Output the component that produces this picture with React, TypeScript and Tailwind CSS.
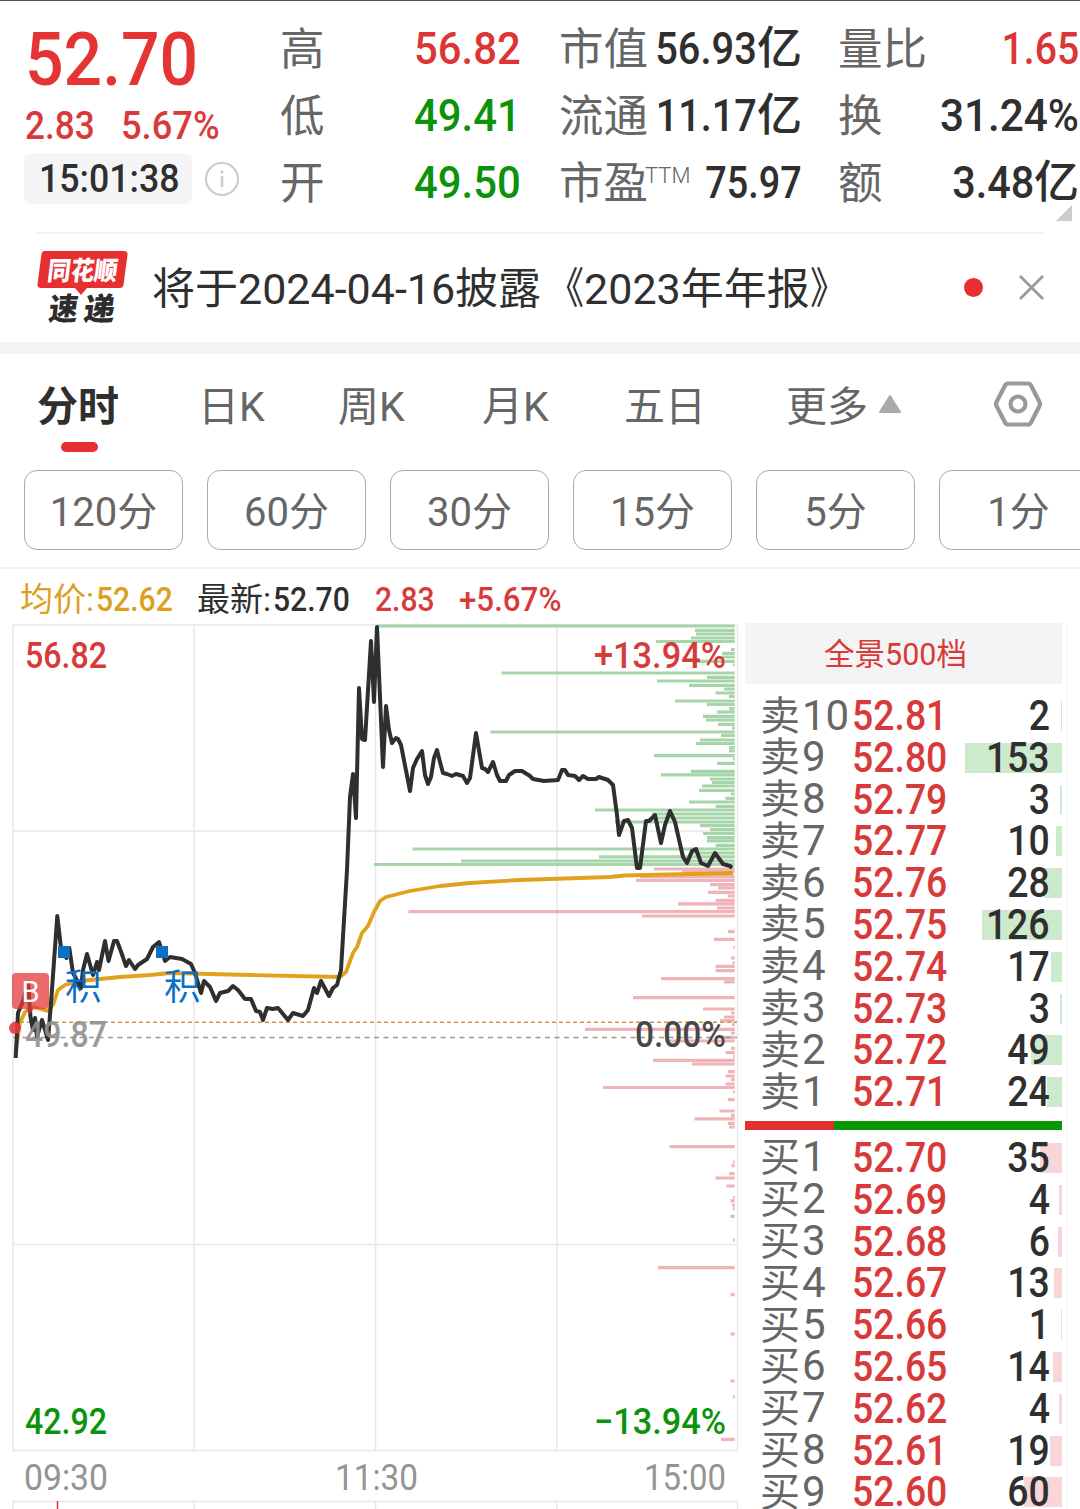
import React from 'react'
import clsx from 'clsx'

type Tone = 'red' | 'green' | 'dark'

const toneClass: Record<Tone, string> = {
  red: 'text-[#dc3535]',
  green: 'text-[#0b930b]',
  dark: 'text-[#2f2f2f]',
}

const quotes: { label: string, sup?: string, value: string, unit?: string, tone: Tone, scale: string }[][] = [
  [
    { label: '高', value: '56.82', tone: 'red', scale: 'scale-x-[.93]' },
    { label: '低', value: '49.41', tone: 'green', scale: 'scale-x-[.93]' },
    { label: '开', value: '49.50', tone: 'green', scale: 'scale-x-[.93]' },
  ],
  [
    { label: '市值', value: '56.93', unit: '亿', tone: 'dark', scale: 'scale-x-[.885]' },
    { label: '流通', value: '11.17', unit: '亿', tone: 'dark', scale: 'scale-x-[.88]' },
    { label: '市盈', sup: 'TTM', value: '75.97', tone: 'dark', scale: 'scale-x-[.84]' },
  ],
  [
    { label: '量比', value: '1.65', tone: 'red', scale: 'scale-x-[.87]' },
    { label: '换', value: '31.24%', tone: 'dark', scale: 'scale-x-[.94]' },
    { label: '额', value: '3.48', unit: '亿', tone: 'dark', scale: 'scale-x-[.92]' },
  ],
]

const columnClass = ['left-[280px] w-[241px]', 'left-[559px] w-[243px]', 'left-[838px] w-[241px]']
const periods = ['120分', '60分', '30分', '15分', '5分', '1分']

const asks: [string, string, number][] = [
  ['10', '52.81', 2], ['9', '52.80', 153], ['8', '52.79', 3], ['7', '52.77', 10], ['6', '52.76', 28],
  ['5', '52.75', 126], ['4', '52.74', 17], ['3', '52.73', 3], ['2', '52.72', 49], ['1', '52.71', 24],
]
const bids: [string, string, number][] = [
  ['1', '52.70', 35], ['2', '52.69', 4], ['3', '52.68', 6], ['4', '52.67', 13], ['5', '52.66', 1],
  ['6', '52.65', 14], ['7', '52.62', 4], ['8', '52.61', 19], ['9', '52.60', 60],
]

// intraday price
const priceLine = '15.7,1058 18,1013 23,1001 28,983 30.5,1017 33,1030 35,1018 37,1037 42,1020 48,1040 51,1003 57.3,916 61,948 66.5,958 69.3,948 73,973 81,988 83,970 87,954 93,975 97,962 99,970 105,941 108.5,961 114,941 117,941 121.5,953 126,966 129,960 135,969 138,965 147,959 153,947 159,942 165,961 170,957 182,959 191,964 195,973 201,993 204,981 210,987 216,1001 220,993 228,991 233,986 238,990 245,999 251,999 256,1011 260,1012 263,1020 267,1008 273,1009 278,1008 283,1014 288,1020 293,1013 303,1016 308,1010 314,988 317,993 321,981 329,996 333,988 337,985 341,970 347,870 350,797 353,774 356,818 359,688 362,739 365,740 371,641 374,702 377,627 383,767 386,706 389,730 392,743 396,738 398,739 401,745 410,791 413,768 417,759 422,751 425,775 428,784 431,777 434,758 437,750 440,762 443,773 447,774 452,776 456,774 463,776 467,783 470,778 476,733 482,768 485,769 488,772 493,762 497,775 500,781 506,781 509,775 515,771 522,771 530,776 533,779 544,781 558,780 562,770 565,770 568,775 575,776 579,780 583,776 588,779 596,779 599,777 608,780 613,785 617,815 619,835 624,821 628,820 632,828 637,868 640,868 646,821 649,821 655,815 661,843 665,825 670,811 675,822 683,857 687,863 692,851 696,849 701,863 708,866 715,853 723,864 730,866 732,868'
// volume weighted average
const averageLine = '16,1050 20,1023 25,1012 33,1007 48,1011 53,1005 58,990 65,985 80,981 100,979 120,977 150,975 170,973 250,975 340,977 346,972 353,953 357,947 362,933 368,926 374,912 380,901 386,897 410,891 440,886 470,883 520,880 610,877 625,875.5 733,873'

// [y, left edge] of each price level, bars end at the right side
const sellLevels = [
  [626, 377], [630.3, 695], [634, 696], [638, 691], [641.5, 656], [649.5, 731], [653.3, 722], [657, 722], [661.3, 696], [665, 733],
  [673, 501.5], [677.3, 707], [681, 657], [685.3, 689], [689, 724], [693, 715.5], [696.5, 729], [701, 675], [704.5, 707], [708.7, 729],
  [712, 717], [716.3, 703], [720, 706], [724.3, 718], [728, 732], [732, 490.5], [735.5, 721], [740, 700], [743.5, 696], [747.7, 729],
  [751, 729], [755.7, 654], [759, 733], [763.3, 717], [771.3, 691], [774.8, 661], [779, 710], [782.5, 712], [786, 702], [790.3, 699],
  [794, 731], [798.3, 725.5], [802, 689], [806.3, 715.5], [810, 595], [814, 652], [818, 655], [822, 615], [825.7, 700], [829.7, 710],
  [833.5, 703], [837.7, 707], [841, 707], [845.3, 715.5], [849, 412.5], [853, 690], [856.8, 599], [861, 461], [864.5, 374],
]
const buyLevels = [
  [869, 654], [872, 682], [876.7, 640], [880.3, 636], [884.7, 710], [888, 718], [892.3, 708], [896, 728], [900.3, 715.5], [903.8, 678],
  [908, 717], [911.7, 408.5], [916, 642], [931.7, 728], [939.3, 714], [947.3, 733.5], [958, 731], [963, 732.5], [966.3, 715.5],
  [970.7, 715.5], [978.7, 661], [982, 724], [997.7, 633], [1009, 703], [1013, 731], [1017, 724], [1020.7, 720], [1024.7, 732],
  [1029.3, 585], [1033, 731], [1037.3, 722], [1041, 667], [1048.3, 731], [1052.7, 725.5], [1056.7, 733], [1060.3, 653], [1064, 692],
  [1071.7, 728], [1076, 725.5], [1079.7, 731], [1084, 725.5], [1087.5, 603], [1092, 733], [1099.7, 728], [1111, 719.5], [1115.3, 731],
  [1118.8, 694.5], [1123.3, 728], [1127, 729], [1146.7, 669.5], [1162, 733], [1165.7, 731.5], [1173.7, 729], [1178, 715.5], [1186, 726.5],
  [1197.3, 733], [1200.8, 730.5], [1205, 732], [1208.7, 733], [1216.3, 730.5], [1240, 733], [1267.7, 658], [1294.7, 730.5],
  [1334, 730.5], [1381, 730.5], [1396.7, 733], [1439.3, 721],
]

function Num({ children, className }: { children: React.ReactNode, className?: string }) {
  return <span className={clsx('inline-block whitespace-nowrap font-medium', className)}>{children}</span>
}

function ChartText({ x, y, w, color, weight = 500, children }: { x: number, y: number, w: number, color: string, weight?: number, children: string }) {
  return (
    <text x={x} y={y} textLength={w} lengthAdjust="spacingAndGlyphs" fill={color} fontSize="36.5" fontWeight={weight}>
      {children}
    </text>
  )
}

function Header() {
  return (
    <header className="relative h-[232px] border-t border-[#555]">
      <div className="ml-[25px] w-[240px] pt-[16px]">
        <Num className="block origin-left scale-x-[.905] text-[75px] leading-[84px] text-[#e53434]">52.70</Num>
        <div className="flex h-[50px] items-center text-[39px] leading-none text-[#d83a3a]">
          <Num className="w-[96px] origin-left scale-x-[.9]">2.83</Num>
          <Num className="origin-left scale-x-[.93]">5.67%</Num>
        </div>
        <div className="-ml-px mt-[2px] flex items-center">
          <div className="flex h-[51px] w-[168px] items-center rounded-lg bg-[#f5f5f5] pl-[15px] pt-[2px] text-[39px] text-[#2f2f2f]">
            <Num className="origin-left scale-x-[.915]">15:01:38</Num>
          </div>
          <svg className="ml-3 h-9 w-9" viewBox="0 0 36 36" fill="none" stroke="#ccc" strokeWidth="2.2">
            <circle cx="18" cy="18" r="16" />
            <path d="M18 15v11M18 9.5v3" strokeWidth="2.6" />
          </svg>
        </div>
      </div>
      {quotes.map((column, i) => (
        <dl key={i} className={clsx('absolute top-[14px]', columnClass[i])}>
          {column.map((q) => (
            <div key={q.label} className="flex h-[67px] items-center justify-between whitespace-nowrap text-[45px] leading-none">
              <dt className="flex pt-[3px] text-[44.5px] text-[#666]">
                {q.label}
                {q.sup && <sup className="-ml-[3px] top-0 mt-[3px] text-[22px] font-light leading-none">{q.sup}</sup>}
              </dt>
              <dd className={clsx('flex items-center', toneClass[q.tone])}>
                <Num className={clsx('-ml-10 origin-right', q.scale)}>{q.value}</Num>
                {q.unit && <span className="font-medium">{q.unit}</span>}
              </dd>
            </div>
          ))}
        </dl>
      ))}
      <svg className="absolute right-2 top-[204px] h-4 w-4" viewBox="0 0 16 16"><path d="M16 0v16H0z" fill="#ccc" /></svg>
    </header>
  )
}

function Notice() {
  return (
    <div className="ml-9 mr-9 flex h-[110px] items-center border-t-2 border-[#f4f4f4]">
      <svg className="h-[80px] w-[94px] shrink-0" viewBox="36 248 94 80">
        <path d="M45 251h79q4 0 3.500 4l-4 30q-.5 3-4 3H87l-6 7-6-7H41q-4 0-3.500-4l4-30q.5-3 3.500-3z" fill="#e72e30" />
        <g transform="skewX(-7)">
          <text x="81" y="280" fill="#fff" fontSize="26" fontWeight="900" textLength="70" lengthAdjust="spacingAndGlyphs">同花顺</text>
          <text x="87" y="320" fill="#2d2d2d" fontSize="31" fontWeight="900" textLength="29" lengthAdjust="spacingAndGlyphs">速</text>
          <text x="122" y="320" fill="#2d2d2d" fontSize="31" fontWeight="900" textLength="31" lengthAdjust="spacingAndGlyphs">递</text>
        </g>
      </svg>
      <p className="ml-[22px] flex-1 whitespace-nowrap pt-[3px] text-[43px] text-[#2f2f2f]">
        将于2024-04-16披露
        <span className="inline-block origin-right scale-x-[.85]">《</span>2023年年报<span className="inline-block origin-left scale-x-[.85]">》</span>
      </p>
      <span className="h-[19px] w-[19px] -translate-y-px rounded-full bg-[#e72e30]" />
      <svg className="ml-9 h-[25px] w-[25px] -translate-y-px" viewBox="0 0 25 25" stroke="#999" strokeWidth="2.800"><path d="M1 1l23 23M24 1L1 24" /></svg>
    </div>
  )
}

function Tabs() {
  return (
    <nav className="relative h-[116px] border-t-[12px] border-[#f4f4f4] text-[41px] text-[#666]">
      <div className="flex h-[99px] items-center whitespace-nowrap pl-[37px]">
        <div className="flex pt-[8px]">
          <span className="w-[161px] font-bold text-[#2f2f2f]">分时</span>
          <span className="w-[140px]">日K</span>
          <span className="w-[144px]">周K</span>
          <span className="w-[142px]">月K</span>
          <span className="w-[162px]">五日</span>
          <span className="w-[82px]">更多</span>
        </div>
        <svg className="ml-[10px] h-5 w-6" viewBox="0 0 24 20"><path d="M12 2l10 16H2z" fill="#aaa" stroke="#aaa" strokeWidth="2" strokeLinejoin="round" /></svg>
        <svg className="ml-[91px] h-[50px] w-[50px]" viewBox="0 0 50 50" fill="none" stroke="#999" strokeWidth="4.200" strokeLinejoin="round">
          <path d="M15 4.500h20q2 0 3 2l8.500 16.500q1 2 0 4L38 43.500q-1 2-3 2H15q-2 0-3-2L3.500 27q-1-2 0-4L12 6.500q1-2 3-2z" />
          <circle cx="25" cy="25" r="7.500" />
        </svg>
      </div>
      <span className="absolute left-[61px] top-[88px] h-[10px] w-[37px] rounded-full bg-[#e72e30]" />
    </nav>
  )
}

function Chart() {
  return (
    <svg className="h-[886px] w-[744px] shrink-0" viewBox="0 623 744 886">
      <g fill="none" stroke="#e8e8e8" strokeWidth="1.500">
        <path d="M13 625H737.500V1450.500H13zM13 831H737M13 1244.500H737" />
        <path d="M194 625V1450M375.500 625V1450M557 625V1450" />
        <path d="M13 1509V1501.500H737.500V1509M194 1502v7M375.500 1502v7M557 1502v7" />
      </g>
      <path d="M57.500 1501v8" stroke="#dc3535" strokeWidth="1.500" />
      <path d={sellLevels.map(([y, x]) => `M${x} ${y}H734.700`).join('')} stroke="#8fcb92" strokeOpacity=".8" strokeWidth="3.200" />
      <path d={buyLevels.map(([y, x]) => `M${x} ${y}H734.700`).join('')} stroke="#e99b9d" strokeOpacity=".75" strokeWidth="3.200" />
      <path d="M13 1022.300H737" stroke="#d1954a" strokeWidth="1.600" strokeDasharray="4 3" />
      <path d="M13 1037.500H737" stroke="#999" strokeWidth="1.600" strokeDasharray="5 4.500" />
      <polyline points={averageLine} fill="none" stroke="#e0a21c" strokeWidth="3.800" strokeLinejoin="round" />
      <polyline points={priceLine} fill="none" stroke="#2f2f2f" strokeWidth="4" strokeLinejoin="round" />

      <ChartText x={25} y={668} w={82} color="#d83a3a">56.82</ChartText>
      <ChartText x={594} y={668} w={132} color="#d83a3a">+13.94%</ChartText>
      <g opacity=".9"><ChartText x={25} y={1047} w={82} color="#909090">49.87</ChartText></g>
      <ChartText x={635} y={1047} w={91} color="#484848">0.00%</ChartText>
      <ChartText x={25} y={1434} w={82} color="#0b930b">42.92</ChartText>
      <ChartText x={594} y={1434} w={132} color="#0b930b">−13.94%</ChartText>
      <ChartText x={24} y={1490} w={84} color="#949494" weight={400}>09:30</ChartText>
      <ChartText x={335} y={1490} w={83} color="#949494" weight={400}>11:30</ChartText>
      <ChartText x={644} y={1490} w={82} color="#949494" weight={400}>15:00</ChartText>

      <g fill="#0b6fc6" fontSize="36.500">
        <path d="M58 946h12v12H58zM156 946h12v12h-12z" />
        <text x="65" y="1000">积</text>
        <text x="164" y="1000">积</text>
      </g>
      <path d="M16 973h29q4 0 4 4v28q0 4-4 4H34l-4 5-4-5H16q-4 0-4-4v-28q0-4 4-4z" fill="#e4393c" fillOpacity=".75" />
      <text x="30.500" y="1001.500" textAnchor="middle" fill="#fff" fontSize="29">B</text>
      <circle cx="15" cy="1028" r="6" fill="#e4393c" fillOpacity=".9" />
    </svg>
  )
}

function OrderRow({ side, level, price, size }: { side: 'ask' | 'bid', level: string, price: string, size: number }) {
  return (
    <div className="relative flex h-[41.8px] items-center whitespace-nowrap pl-[15px] text-[42px] leading-[41.8px]">
      <span
        className={clsx('absolute right-0 top-[6px] h-[30px]', side === 'ask' ? 'bg-[#cdeacd]' : 'bg-[#f8d5d6]')}
        style={{ width: Math.max(1, size * 0.634) }}
      />
      <span className="flex w-[92px] shrink-0 text-[#666]">
        <span className="w-[42px] pt-px text-[40px]">{side === 'ask' ? '卖' : '买'}</span>
        <span>{level}</span>
      </span>
      <Num className="relative origin-left scale-x-[.89] text-[#d83a3a]">{price}</Num>
      <Num className="absolute right-[12px] origin-right scale-x-[.89] text-[#2f2f2f]">{size}</Num>
    </div>
  )
}

function OrderBook() {
  return (
    <aside className="h-[886px] w-[324px] overflow-hidden border-r border-[#f3f3f3] pl-px pr-[5px]">
      <div className="flex h-[61px] items-center justify-center bg-[#f4f4f4] pr-4 pt-[2px] text-[30.500px] text-[#d83a3a]">全景500档</div>
      <div className="pt-[11px]">
        {asks.map(([level, price, size]) => <OrderRow key={level} side="ask" level={level} price={price} size={size} />)}
      </div>
      <div className="mb-[7px] mt-[8px] flex h-[9px] bg-[#059a05]"><div className="w-[89px] bg-[#e03131]" /></div>
      {bids.map(([level, price, size]) => <OrderRow key={level} side="bid" level={level} price={price} size={size} />)}
    </aside>
  )
}

export default function App() {
  return (
    <main className="h-[1509px] w-[1080px] overflow-hidden bg-white font-['Roboto','Noto_Sans_CJK_SC',sans-serif]">
      <Header />
      <Notice />
      <Tabs />
      <div className="flex h-[109px] gap-6 overflow-hidden pl-6 pt-3">
        {periods.map((p) => (
          <button key={p} className="h-[80px] w-[159px] shrink-0 rounded-[13px] border border-[#aaa] pt-[5px] text-[40px] text-[#666]">{p}</button>
        ))}
      </div>
      <div className="flex h-[56px] items-center whitespace-nowrap border-t-2 border-[#f1f1f1] pl-5 pt-[7px] text-[33px]">
        <div className="w-[177px] text-[#dba021]">均价:<Num className="ml-[2px] origin-left scale-x-[.885] text-[34px]">52.62</Num></div>
        <div className="w-[178px] text-[#2f2f2f]">最新:<Num className="ml-[2px] origin-left scale-x-[.885] text-[34px]">52.70</Num></div>
        <Num className="w-[84px] origin-left scale-x-[.885] text-[34px] text-[#d83a3a]">2.83</Num>
        <Num className="origin-left scale-x-[.92] text-[34px] text-[#d83a3a]">+5.67%</Num>
      </div>
      <div className="flex">
        <Chart />
        <OrderBook />
      </div>
    </main>
  )
}
